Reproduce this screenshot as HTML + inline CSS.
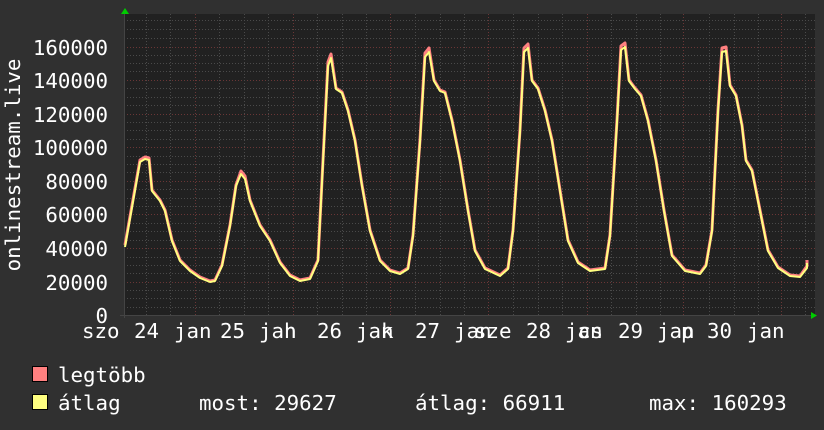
<!DOCTYPE html>
<html><head><meta charset="utf-8"><style>
html,body{margin:0;padding:0}
body{width:824px;height:430px;background:#303030;position:relative;overflow:hidden;font-family:"DejaVu Sans Mono","Liberation Mono",monospace;color:#fff;font-size:20.8px}
.t{position:absolute;white-space:pre;line-height:1}
.yl{position:absolute;right:716px;line-height:1}
</style></head><body>
<svg width="824" height="430" style="position:absolute;left:0;top:0">
<rect x="124" y="14" width="691" height="301" fill="#212121"/>
<g stroke="#4a4a4a" stroke-width="1" stroke-dasharray="1,2">
<line x1="124" x2="815" y1="20.5" y2="20.5"/><line x1="124" x2="815" y1="29.5" y2="29.5"/>
<line x1="124" x2="815" y1="38.5" y2="38.5"/><line x1="124" x2="815" y1="55.5" y2="55.5"/>
<line x1="124" x2="815" y1="63.5" y2="63.5"/><line x1="124" x2="815" y1="71.5" y2="71.5"/>
<line x1="124" x2="815" y1="88.5" y2="88.5"/><line x1="124" x2="815" y1="97.5" y2="97.5"/>
<line x1="124" x2="815" y1="105.5" y2="105.5"/><line x1="124" x2="815" y1="122.5" y2="122.5"/>
<line x1="124" x2="815" y1="130.5" y2="130.5"/><line x1="124" x2="815" y1="139.5" y2="139.5"/>
<line x1="124" x2="815" y1="156.5" y2="156.5"/><line x1="124" x2="815" y1="164.5" y2="164.5"/>
<line x1="124" x2="815" y1="172.5" y2="172.5"/><line x1="124" x2="815" y1="189.5" y2="189.5"/>
<line x1="124" x2="815" y1="198.5" y2="198.5"/><line x1="124" x2="815" y1="206.5" y2="206.5"/>
<line x1="124" x2="815" y1="223.5" y2="223.5"/><line x1="124" x2="815" y1="231.5" y2="231.5"/>
<line x1="124" x2="815" y1="240.5" y2="240.5"/><line x1="124" x2="815" y1="257.5" y2="257.5"/>
<line x1="124" x2="815" y1="265.5" y2="265.5"/><line x1="124" x2="815" y1="273.5" y2="273.5"/>
<line x1="124" x2="815" y1="290.5" y2="290.5"/><line x1="124" x2="815" y1="298.5" y2="298.5"/>
<line x1="124" x2="815" y1="307.5" y2="307.5"/>
</g>
<g stroke="#6a3636" stroke-width="1" stroke-dasharray="1,2">
<line x1="124" x2="815" y1="47.5" y2="47.5"/><line x1="124" x2="815" y1="80.5" y2="80.5"/>
<line x1="124" x2="815" y1="114.5" y2="114.5"/><line x1="124" x2="815" y1="147.5" y2="147.5"/>
<line x1="124" x2="815" y1="181.5" y2="181.5"/><line x1="124" x2="815" y1="214.5" y2="214.5"/>
<line x1="124" x2="815" y1="248.5" y2="248.5"/><line x1="124" x2="815" y1="282.5" y2="282.5"/>
<line y1="14" y2="315" x1="195.5" x2="195.5"/><line y1="14" y2="315" x1="293.5" x2="293.5"/>
<line y1="14" y2="315" x1="390.5" x2="390.5"/><line y1="14" y2="315" x1="488.5" x2="488.5"/>
<line y1="14" y2="315" x1="587.5" x2="587.5"/><line y1="14" y2="315" x1="683.5" x2="683.5"/>
<line y1="14" y2="315" x1="781.5" x2="781.5"/>
</g>
<g stroke="#4a4a4a" stroke-width="1" stroke-dasharray="1,2">
<line y1="14" y2="315" x1="146.5" x2="146.5"/><line y1="14" y2="315" x1="170.5" x2="170.5"/>
<line y1="14" y2="315" x1="219.5" x2="219.5"/><line y1="14" y2="315" x1="244.5" x2="244.5"/><line y1="14" y2="315" x1="268.5" x2="268.5"/>
<line y1="14" y2="315" x1="317.5" x2="317.5"/><line y1="14" y2="315" x1="342.5" x2="342.5"/><line y1="14" y2="315" x1="366.5" x2="366.5"/>
<line y1="14" y2="315" x1="415.5" x2="415.5"/><line y1="14" y2="315" x1="440.5" x2="440.5"/><line y1="14" y2="315" x1="464.5" x2="464.5"/>
<line y1="14" y2="315" x1="513.5" x2="513.5"/><line y1="14" y2="315" x1="538.5" x2="538.5"/><line y1="14" y2="315" x1="562.5" x2="562.5"/>
<line y1="14" y2="315" x1="611.5" x2="611.5"/><line y1="14" y2="315" x1="636.5" x2="636.5"/><line y1="14" y2="315" x1="660.5" x2="660.5"/>
<line y1="14" y2="315" x1="709.5" x2="709.5"/><line y1="14" y2="315" x1="734.5" x2="734.5"/><line y1="14" y2="315" x1="758.5" x2="758.5"/>
<line y1="14" y2="315" x1="805.5" x2="805.5"/>
</g>
<line x1="124.5" y1="12" x2="124.5" y2="318" stroke="#444"/>
<line x1="120" y1="315.5" x2="815" y2="315.5" stroke="#444"/>
<polygon points="121,14 125,8 129,14" fill="#0c0"/>
<polygon points="811,312 817,315.5 811,319" fill="#0c0"/>
<polyline fill="none" stroke="#ff8080" stroke-width="3" stroke-linejoin="round" points="125,245 140,160 145,157 149,158 152,190 160,200 165,210 172,240 180,260 190,270 200,277 210,281 215,280 222,265 230,225 236,185 241,171 245,176 250,200 260,225 270,240 280,262 290,275 300,280 310,278 318,260 323,160 328,62 331,54 336,88 342,92 348,110 355,140 362,185 370,230 380,260 390,270 400,273 408,268 413,235 420,140 425,53 429,48 434,80 440,90 445,92 452,120 460,160 468,210 475,250 485,268 500,275 508,268 513,230 520,130 524,48 528,44 532,80 538,88 545,110 552,140 560,190 568,240 578,262 590,270 605,268 610,235 617,120 621,46 625,43 629,80 635,88 641,95 648,120 656,160 664,210 672,255 685,270 700,273 706,265 712,230 718,110 722,48 726,47 730,85 736,95 742,125 746,160 752,170 760,210 768,250 778,267 790,275 800,276 807,266 807,260"/>
<polyline fill="none" stroke="#ffff80" stroke-width="2" stroke-linejoin="round" points="125,247 140,162 145,159 149,160 152,191 160,201 165,211 172,241 180,261 190,271 200,278 210,282 215,281 222,266 230,226 236,186 241,174 245,179 250,201 260,226 270,241 280,263 290,276 300,281 310,279 318,261 323,162 328,66 331,58 336,89 342,93 348,111 355,141 362,186 370,231 380,261 390,271 400,274 408,269 413,236 420,142 425,57 429,52 434,81 440,91 445,93 452,121 460,161 468,211 475,251 485,269 500,276 508,269 513,231 520,132 524,52 528,48 532,81 538,89 545,111 552,141 560,191 568,241 578,263 590,271 605,269 610,236 617,122 621,50 625,47 629,81 635,89 641,96 648,121 656,161 664,211 672,256 685,271 700,274 706,266 712,231 718,112 722,52 726,51 730,86 736,96 742,126 746,161 752,171 760,211 768,251 778,268 790,276 800,277 807,268 807,263"/>
<rect x="32.5" y="366.5" width="15" height="15" fill="#ff8080" stroke="#000"/>
<rect x="32.5" y="394.5" width="15" height="15" fill="#ffff80" stroke="#000"/>
<text x="20" y="165" fill="#fff" font-family="DejaVu Sans Mono" font-size="20.8" text-anchor="middle" transform="rotate(-90 20 165)">onlinestream.live</text>
</svg>
<div class="yl" style="top:38px">160000</div>
<div class="yl" style="top:71px">140000</div>
<div class="yl" style="top:105px">120000</div>
<div class="yl" style="top:138px">100000</div>
<div class="yl" style="top:172px">80000</div>
<div class="yl" style="top:205px">60000</div>
<div class="yl" style="top:239px">40000</div>
<div class="yl" style="top:273px">20000</div>
<div class="yl" style="top:306px">0</div>
<div class="t" style="left:82px;top:321px">szo</div>
<div class="t" style="left:134px;top:321px">24</div>
<div class="t" style="left:174px;top:321px">jan</div>
<div class="t" style="left:220px;top:321px">25</div>
<div class="t" style="left:259px;top:321px">jan</div>
<div class="t" style="left:284px;top:321px">h</div>
<div class="t" style="left:317px;top:321px">26</div>
<div class="t" style="left:356px;top:321px">jan</div>
<div class="t" style="left:381px;top:321px">k</div>
<div class="t" style="left:415px;top:321px">27</div>
<div class="t" style="left:454px;top:321px">jan</div>
<div class="t" style="left:474px;top:321px">sze</div>
<div class="t" style="left:526px;top:321px">28</div>
<div class="t" style="left:565px;top:321px">jan</div>
<div class="t" style="left:578px;top:321px">cs</div>
<div class="t" style="left:618px;top:321px">29</div>
<div class="t" style="left:657px;top:321px">jan</div>
<div class="t" style="left:681px;top:321px">p</div>
<div class="t" style="left:707px;top:321px">30</div>
<div class="t" style="left:747px;top:321px">jan</div>
<div class="t" style="left:58px;top:365px">legtöbb</div>
<div class="t" style="left:58px;top:393px">átlag</div>
<div class="t" style="left:199px;top:393px">most: 29627</div>
<div class="t" style="left:415px;top:393px">átlag: 66911</div>
<div class="t" style="left:649px;top:393px">max: 160293</div>
</body></html>
